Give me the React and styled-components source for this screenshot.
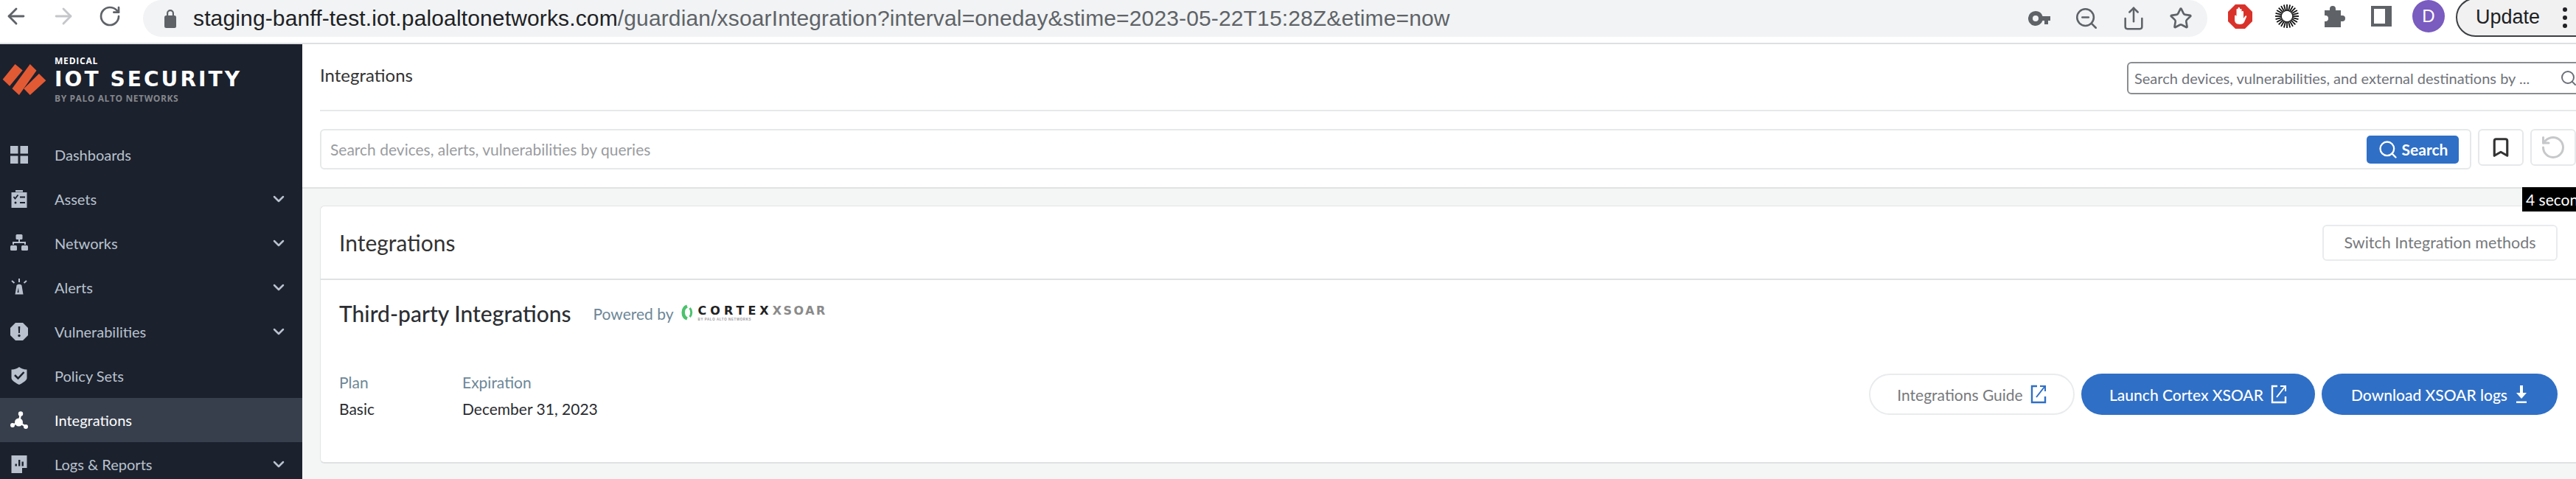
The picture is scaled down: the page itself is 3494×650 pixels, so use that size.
import React from 'react';
import styled, { createGlobalStyle } from 'styled-components';
import {
    ArrowLeft, ArrowRight, RotateCw, ZoomOut, Share, Star, Search, Bookmark, RotateCcw, ChevronDown,
} from 'lucide-react';

const GlobalStyle = createGlobalStyle`
    html, body {
        margin: 0;
        padding: 0;
        background: #fff;
    }
    * {
        box-sizing: border-box;
    }
`;

const navItems = [
    { label: 'Dashboards', icon: 'grid' },
    { label: 'Assets', icon: 'clipboard', more: true },
    { label: 'Networks', icon: 'network', more: true },
    { label: 'Alerts', icon: 'siren', more: true },
    { label: 'Vulnerabilities', icon: 'warning', more: true },
    { label: 'Policy Sets', icon: 'shield' },
    { label: 'Integrations', icon: 'hub', active: true },
    { label: 'Logs & Reports', icon: 'logs', more: true },
];

function NavIcon({ name }) {
    const bg = name === 'hub' ? '#fff' : '#b9c1ce';
    const cut = '#1b212d';
    return (
        <svg width="24" height="24" viewBox="0 0 24 24" fill={ bg }>
            { name === 'grid' && <>
                <rect x="0" y="0" width="10.5" height="10.5" />
                <rect x="13.5" y="0" width="10.5" height="10.5" />
                <rect x="0" y="13.5" width="10.5" height="10.5" />
                <rect x="13.5" y="13.5" width="10.5" height="10.5" />
            </> }
            { name === 'clipboard' && <>
                <path d="M7 0h10v2.5H7z" />
                <path d="M1.500 3h21v21h-21z" />
                <path d="M4.500 9l2 2.500 4-5" fill="none" stroke={ cut } strokeWidth="1.800" />
                <path d="M13 9.500h7M13 17h7" stroke={ cut } strokeWidth="2" />
                <circle cx="7" cy="17" r="1.500" fill={ cut } />
            </> }
            { name === 'network' && <>
                <rect x="7.500" y="0" width="9" height="7" rx="1.500" />
                <path d="M11 6h2v4h8v4h-2v-2H5v2H3v-4h8z" />
                <rect x="0" y="15" width="9" height="7" rx="1.500" />
                <rect x="15" y="15" width="9" height="7" rx="1.500" />
            </> }
            { name === 'siren' && <>
                <path d="M8.500 9.500c.5-2.500 6.500-2.500 7 0l2 12h-11z" />
                <path d="M11 12l-1.500 7h2z" fill={ cut } />
                <path d="M12 0v5M2 3l3.500 3M22 3l-3.500 3" stroke={ bg } strokeWidth="2" />
            </> }
            { name === 'warning' && <>
                <path d="M7 0h10l7 7v10l-7 7H7l-7-7V7z" />
                <path d="M10.700 5h2.600l-.4 9h-1.800z" fill={ cut } />
                <circle cx="12" cy="17.500" r="1.700" fill={ cut } />
            </> }
            { name === 'shield' && <>
                <path d="M1.500 3.500C6 3.500 9 2 12 0c3 2 6 3.500 10.500 3.500V15c0 3-6 7-10.500 9-4.500-2-10.500-6-10.500-9z" />
                <path d="M6 11l4.500 4.500L18.500 7" fill="none" stroke={ cut } strokeWidth="2.500" />
            </> }
            { name === 'hub' && <>
                <circle cx="14" cy="3.500" r="3.200" />
                <circle cx="3" cy="19" r="3" />
                <circle cx="21" cy="21" r="3" />
                <circle cx="11.500" cy="15" r="5.500" />
                <path d="M14 3.500l-2 11M3 19l8-4M21 21l-9-6" stroke={ bg } strokeWidth="2.500" />
            </> }
            { name === 'logs' && <>
                <path d="M1.500 0h21v17h-6.500v7H1.500z" />
                <path d="M6.500 11.500h2.400v3H6.500zM11 6h2.400v8.500H11zM15.500 8.500h2.400v6h-2.400z" fill={ cut } />
            </> }
        </svg>
    );
}

function ExternalIcon() {
    return (
        <svg width="22" height="26" viewBox="0 0 22 26" fill="none" stroke="currentColor" strokeWidth="2.400">
            <path d="M9 2H2v22h18v-8" />
            <path d="M8 17L19 3M13 2h7v7" strokeWidth="2" />
        </svg>
    );
}

export default function App() {
    return (
        <>
            <GlobalStyle />
            <Page>
                <BrowserBar>
                    <BrowserNav>
                        <ArrowLeft size={ 34 } color="#5f6368" strokeWidth={ 2 } />
                        <ArrowRight size={ 34 } color="#c4c6c9" strokeWidth={ 2 } />
                        <RotateCw size={ 32 } color="#5f6368" strokeWidth={ 2 } />
                    </BrowserNav>
                    <AddressBar>
                        <svg width="18" height="28" viewBox="0 0 18 28" fill="#5f6368">
                            <path d="M4 11V7a5 5 0 0 1 10 0v4h-2.200V7a2.800 2.800 0 0 0-5.600 0v4z" />
                            <rect x="1" y="10" width="16" height="17" rx="2.500" />
                        </svg>
                        <Url><b>staging-banff-test.iot.paloaltonetworks.com</b>/guardian/xsoarIntegration?interval=oneday&amp;stime=2023-05-22T15:28Z&amp;etime=now</Url>
                        <AddressActions>
                            <ToolSlot>
                                <svg width="30" height="24" viewBox="0 0 30 24" fill="#5f6368">
                                    <path fillRule="evenodd" d="M10 2a10 10 0 0 1 9.500 7H30v6h-3v5h-5v-5h-2.500A10 10 0 1 1 10 2zm0 6a4 4 0 1 0 0 8 4 4 0 0 0 0-8z" />
                                </svg>
                            </ToolSlot>
                            <ToolSlot><ZoomOut size={ 34 } color="#5f6368" strokeWidth={ 1.800 } /></ToolSlot>
                            <ToolSlot><Share size={ 34 } color="#5f6368" strokeWidth={ 1.800 } /></ToolSlot>
                            <ToolSlot><Star size={ 32 } color="#5f6368" strokeWidth={ 2 } /></ToolSlot>
                        </AddressActions>
                    </AddressBar>
                    <Extensions>
                        <ToolSlot>
                            <svg width="33" height="33" viewBox="0 0 33 33">
                                <path d="M10 0h13l10 10v13L23 33H10L0 23V10z" fill="#d9322a" />
                                <path d="M9 16c0-2 2-1.500 2.500 0V7c0-1.500 2-1.500 2 0V5c0-1.500 2.500-1.500 2.500 0v2c0-1.500 2.500-1.500 2.500 0v3c0-1.500 2.500-1.500 2.500 0v9l2-3c1-1.500 3-.5 2 1l-3 7c-1 2-3 3-6 3-5 0-7-3-7-6z" fill="#fff" />
                            </svg>
                        </ToolSlot>
                        <ToolSlot>
                            <svg width="32" height="32" viewBox="0 0 32 32" stroke="#111" strokeWidth="1.800" strokeLinecap="butt">
                                { Array.from({ length: 24 }, (_, i) => (
                                    <line key={ i } x1="16" y1="0" x2="16" y2="9" transform={ `rotate(${i * 15} 16 16)` } />
                                )) }
                            </svg>
                        </ToolSlot>
                        <ToolSlot>
                            <svg width="30" height="30" viewBox="0 0 30 30" fill="#5f6368">
                                <path d="M2 7h7V5a4 4 0 0 1 8 0v2h7v7h2a4 4 0 0 1 0 8h-2v8H2v-8h1a4 4 0 0 0 0-8H2z" />
                            </svg>
                        </ToolSlot>
                        <ToolSlot>
                            <svg width="28" height="28" viewBox="0 0 28 28">
                                <path fillRule="evenodd" d="M0 0h28v28H0zM4 4v20h15V4z" fill="#5f6368" />
                            </svg>
                        </ToolSlot>
                        <ToolSlot><Avatar>D</Avatar></ToolSlot>
                    </Extensions>
                    <UpdatePill>Update<Dots /></UpdatePill>
                </BrowserBar>
                <Body>
                    <Sidebar>
                        <Brand>
                            <svg width="60" height="44" viewBox="10 50 178 128" fill="#e25a34">
                                <path d="M12 113l50-61 30 25-52 63z" />
                                <path d="M122 52l26 26-70 98-28-26z" />
                                <path d="M158 90l28 28-64 58-25-26z" />
                            </svg>
                            <BrandText>
                                <BrandTop>MEDICAL</BrandTop>
                                <BrandName>IOT SECURITY</BrandName>
                                <BrandSub>BY PALO ALTO NETWORKS</BrandSub>
                            </BrandText>
                        </Brand>
                        { navItems.map( item => (
                            <NavRow key={ item.label } $active={ item.active }>
                                <NavIcon name={ item.icon } />
                                <NavLabel>{ item.label }</NavLabel>
                                { item.more && <ChevronDown size={ 24 } color="#b9c1ce" strokeWidth={ 2.500 } /> }
                            </NavRow>
                        )) }
                    </Sidebar>
                    <Main>
                        <PageHeader>
                            <PageTitle>Integrations</PageTitle>
                            <GlobalSearch>
                                <span>Search devices, vulnerabilities, and external destinations by ...</span>
                                <Search size={ 24 } color="#6b7078" strokeWidth={ 2 } />
                            </GlobalSearch>
                        </PageHeader>
                        <QueryRow>
                            <QueryBox>
                                <QueryHint>Search devices, alerts, vulnerabilities by queries</QueryHint>
                                <SearchButton>
                                    <Search size={ 28 } color="#fff" strokeWidth={ 2 } />
                                    Search
                                </SearchButton>
                            </QueryBox>
                            <SquareButton><Bookmark size={ 30 } color="#333" strokeWidth={ 2.500 } /></SquareButton>
                            <SquareButton><RotateCcw size={ 36 } color="#c6c8ca" strokeWidth={ 2 } /></SquareButton>
                        </QueryRow>
                        <Content>
                            <Timer>4 seconds</Timer>
                            <TitleCard>
                                <CardTitle>Integrations</CardTitle>
                                <SwitchButton>Switch Integration methods</SwitchButton>
                            </TitleCard>
                            <DetailCard>
                                <DetailHead>
                                    <SubTitle>Third-party Integrations</SubTitle>
                                    <Powered>Powered by</Powered>
                                    <CortexLogo>
                                        <svg width="18" height="22" viewBox="0 0 18 22" fill="none" stroke="#4cc26d" strokeWidth="4.500">
                                            <path d="M8 2.500C1 5 1 17 8 19.500" />
                                            <path d="M11.500 5c3 3 3 9 0 12" strokeWidth="3" />
                                        </svg>
                                        <CortexText>
                                            <CortexName>CORTEX<em>XSOAR</em></CortexName>
                                            <CortexBy>BY PALO ALTO NETWORKS</CortexBy>
                                        </CortexText>
                                    </CortexLogo>
                                </DetailHead>
                                <DetailFoot>
                                    <Fact $width={ 167 }>
                                        <FactLabel>Plan</FactLabel>
                                        <FactValue>Basic</FactValue>
                                    </Fact>
                                    <Fact>
                                        <FactLabel>Expiration</FactLabel>
                                        <FactValue>December 31, 2023</FactValue>
                                    </Fact>
                                    <Actions>
                                        <Pill $width={ 279 } $outline>Integrations Guide <ExternalIcon /></Pill>
                                        <Pill $width={ 317 }>Launch Cortex XSOAR <ExternalIcon /></Pill>
                                        <Pill $width={ 320 }>
                                            Download XSOAR logs
                                            <svg width="18" height="26" viewBox="0 0 18 26" fill="#fff">
                                                <path d="M7 1h4v10h5l-7 8-7-8h5zM2 22.500h14V25H2z" />
                                            </svg>
                                        </Pill>
                                    </Actions>
                                </DetailFoot>
                            </DetailCard>
                        </Content>
                    </Main>
                </Body>
            </Page>
        </>
    );
}

const Page = styled.div`
    width: 3494px;
    height: 650px;
    overflow: hidden;
    font-family: 'Lato', sans-serif;
`;

const BrowserBar = styled.header`
    display: flex;
    align-items: flex-start;
    height: 60px;
    background: #fff;
    border-bottom: 2px solid #dee0e2;
`;

const BrowserNav = styled.nav`
    flex: none;
    width: 194px;
    height: 44px;
    padding-left: 5px;
    display: flex;
    align-items: center;
    gap: 30px;
`;

const AddressBar = styled.div`
    flex: none;
    width: 2800px;
    height: 50px;
    padding: 0 4px 0 28px;
    display: flex;
    align-items: center;
    background: #f1f3f4;
    border-radius: 25px;
`;

const Url = styled.div`
    margin-left: 22px;
    flex: 1;
    font: 30px 'Liberation Sans', Arial, sans-serif;
    letter-spacing: .14px;
    color: #5f6368;
    white-space: nowrap;
    b {
        font-weight: 400;
        color: #202124;
    }
`;

const AddressActions = styled.div`
    display: flex;
`;

const ToolSlot = styled.div`
    width: 64px;
    height: 44px;
    display: flex;
    align-items: center;
    justify-content: center;
`;

const Extensions = styled.div`
    flex: none;
    margin-left: 12px;
    display: flex;
`;

const Avatar = styled.div`
    width: 44px;
    height: 44px;
    border-radius: 50%;
    background: #7a5bbf;
    color: #fff;
    display: flex;
    align-items: center;
    justify-content: center;
    font: 24px 'Liberation Sans', Arial, sans-serif;
`;

const UpdatePill = styled.div`
    margin: -3px 0 0 5px;
    flex: none;
    width: 190px;
    height: 53px;
    padding-left: 25px;
    display: flex;
    align-items: center;
    border: 2px solid #3c4043;
    border-radius: 27px;
    background: #f1f1f1;
    color: #202124;
    font: 27px 'Liberation Sans', Arial, sans-serif;
`;

const Dots = styled.i`
    display: block;
    margin-left: 31px;
    width: 6px;
    height: 6px;
    border-radius: 50%;
    background: #202124;
    box-shadow: 0 -11px 0 #202124, 0 11px 0 #202124;
`;

const Body = styled.div`
    display: flex;
    height: 590px;
`;

const Sidebar = styled.aside`
    flex: none;
    width: 410px;
    background: #1b212d;
`;

const Brand = styled.div`
    height: 120px;
    padding: 16px 0 0 3px;
    display: flex;
    gap: 11px;
    align-items: flex-start;
    & > svg {
        margin-top: 10px;
    }
`;

const BrandText = styled.div`
    display: flex;
    flex-direction: column;
`;

const BrandTop = styled.div`
    font: 700 12px/14px 'Open Sans', sans-serif;
    letter-spacing: .8px;
    color: #fff;
`;

const BrandName = styled.div`
    font: 700 28px/36px 'DejaVu Sans', sans-serif;
    letter-spacing: 3.100px;
    color: #fff;
    white-space: nowrap;
`;

const BrandSub = styled.div`
    font: 700 12px/16px 'Open Sans', sans-serif;
    letter-spacing: .6px;
    color: #85878c;
    white-space: nowrap;
`;

const NavRow = styled.div`
    height: 60px;
    padding: 0 20px 0 14px;
    display: flex;
    align-items: center;
    background: ${ props => props.$active ? '#373f4d' : 'transparent' };
    color: ${ props => props.$active ? '#fff' : '#b9c1ce' };
`;

const NavLabel = styled.span`
    margin-left: 36px;
    flex: 1;
    font-size: 20px;
`;

const Main = styled.main`
    flex: 1;
    min-width: 0;
    display: flex;
    flex-direction: column;
`;

const PageHeader = styled.div`
    height: 91px;
    margin-left: 24px;
    padding-top: 24px;
    display: flex;
    align-items: flex-start;
    justify-content: space-between;
    border-bottom: 2px solid #e6e8e9;
`;

const PageTitle = styled.h1`
    margin: 0;
    font-size: 24px;
    font-weight: 400;
    line-height: 36px;
    color: #333;
`;

const GlobalSearch = styled.div`
    flex: none;
    width: 625px;
    height: 44px;
    margin-right: -16px;
    padding: 0 12px 0 8px;
    display: flex;
    align-items: center;
    justify-content: space-between;
    border: 2px solid #8b8d90;
    border-radius: 6px;
    font-size: 20px;
    color: #70737a;
    white-space: nowrap;
`;

const QueryRow = styled.div`
    height: 103px;
    padding: 24px 0 0 24px;
    display: flex;
    align-items: flex-start;
    gap: 9px;
`;

const QueryBox = styled.div`
    flex: 1;
    height: 55px;
    padding: 0 15px 0 12px;
    display: flex;
    align-items: center;
    justify-content: space-between;
    border: 2px solid #e6e8e9;
    border-radius: 6px;
`;

const QueryHint = styled.span`
    font-size: 21px;
    color: #9a9c9f;
`;

const SearchButton = styled.div`
    width: 125px;
    height: 38px;
    display: flex;
    align-items: center;
    justify-content: center;
    gap: 5px;
    border-radius: 5px;
    background: #2f6fc6;
    color: #fff;
    font-size: 21px;
    font-weight: 700;
`;

const SquareButton = styled.div`
    flex: none;
    width: 62px;
    height: 50px;
    display: flex;
    align-items: center;
    justify-content: center;
    border: 2px solid #e6e8e9;
    border-radius: 6px;
`;

const Content = styled.div`
    position: relative;
    flex: 1;
    padding: 23px 0 0 24px;
    background: #f4f6f5;
    border-top: 2px solid #e1e3e3;
`;

const Timer = styled.div`
    position: absolute;
    top: -2px;
    left: 3011px;
    height: 33px;
    padding: 0 6px 0 5px;
    background: #000;
    color: #fff;
    font-size: 21px;
    line-height: 33px;
    white-space: nowrap;
`;

const TitleCard = styled.section`
    height: 99px;
    padding: 0 25px 0 25px;
    display: flex;
    align-items: center;
    justify-content: space-between;
    background: #fff;
    border: 1px solid #e3e5e6;
    border-right: 0;
    border-bottom: 0;
    border-radius: 6px 0 0 0;
`;

const CardTitle = styled.h2`
    margin: 0;
    font-size: 30px;
    font-weight: 400;
    color: #333;
`;

const SwitchButton = styled.div`
    width: 319px;
    height: 49px;
    display: flex;
    align-items: center;
    justify-content: center;
    border: 2px solid #e9ebed;
    border-radius: 6px;
    font-size: 21.5px;
    color: #77797c;
`;

const DetailCard = styled.section`
    height: 251px;
    padding: 0 25px;
    background: #fff;
    border-top: 2px solid #dfe1e2;
    border-left: 1px solid #e3e5e6;
    border-bottom: 2px solid #dfe1e2;
    border-radius: 0 0 0 6px;
`;

const DetailHead = styled.div`
    height: 90px;
    display: flex;
    align-items: center;
`;

const SubTitle = styled.h3`
    margin: 0;
    font-size: 30px;
    font-weight: 500;
    color: #2d2f33;
    white-space: nowrap;
`;

const Powered = styled.span`
    margin-left: 30px;
    font-size: 21px;
    color: #6d8797;
`;

const CortexLogo = styled.div`
    margin: 0 0 0 10px;
    display: flex;
    gap: 5px;
`;

const CortexText = styled.div`
    display: flex;
    flex-direction: column;
`;

const CortexName = styled.div`
    font: 700 16px/17px 'DejaVu Sans', sans-serif;
    letter-spacing: 5px;
    color: #222;
    white-space: nowrap;
    em {
        font-style: normal;
        letter-spacing: 2.500px;
        color: #8a8a8a;
    }
`;

const CortexBy = styled.div`
    font: 700 4.500px/7px 'Liberation Sans', Arial, sans-serif;
    letter-spacing: .6px;
    color: #999;
`;

const DetailFoot = styled.div`
    margin-top: 31px;
    display: flex;
    align-items: flex-start;
`;

const Fact = styled.div`
    width: ${ props => props.$width ? `${props.$width}px` : 'auto' };
`;

const FactLabel = styled.div`
    font-size: 21px;
    line-height: 36px;
    color: #6d8797;
`;

const FactValue = styled.div`
    font-size: 21px;
    line-height: 36px;
    color: #2a2c30;
`;

const Actions = styled.div`
    margin: 6px 0 0 auto;
    display: flex;
    gap: 9px;
`;

const Pill = styled.div`
    width: ${ props => props.$width }px;
    height: 56px;
    display: flex;
    align-items: center;
    justify-content: center;
    gap: 10px;
    border-radius: 28px;
    font-size: 21px;
    font-weight: ${ props => props.$outline ? 400 : 500 };
    white-space: nowrap;
    color: ${ props => props.$outline ? '#77797c' : '#fff' };
    background: ${ props => props.$outline ? '#fff' : '#2f6fc6' };
    border: ${ props => props.$outline ? '2px solid #e9ebed' : '0' };
    svg {
        color: ${ props => props.$outline ? '#2f6fc6' : '#fff' };
    }
`;
